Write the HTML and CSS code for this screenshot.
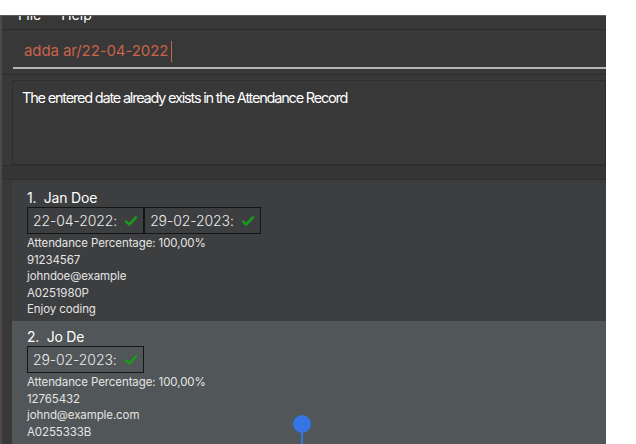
FILE: index.html
```html
<!DOCTYPE html>
<html>
<head>
<meta charset="utf-8">
<link rel="stylesheet" href="styles.css">
</head>
<body>
<div class="window">
  <div class="menubar"><span class="menu">File</span><span class="menu">Help</span></div>
  <div class="command">
    <div class="cmd-text">adda ar/22-04-2022<span class="caret"></span></div>
    <div class="cmd-line"></div>
  </div>
  <div class="sep"></div>
  <div class="result-wrap">
    <div class="result">The entered date already exists in the Attendance Record</div>
  </div>
  <div class="sep2"></div>
  <div class="list">
    <div class="card">
      <div class="name">1.&nbsp; Jan Doe</div>
      <div class="tags">
        <div class="tag">22-04-2022: <svg class="check" viewBox="0 0 16 12"><path d="M1.5 6.5 L6 10.5 L14.5 1.5" fill="none" stroke="#1a9a1a" stroke-width="3"/></svg></div>
        <div class="tag">29-02-2023: <svg class="check" viewBox="0 0 16 12"><path d="M1.5 6.5 L6 10.5 L14.5 1.5" fill="none" stroke="#1a9a1a" stroke-width="3"/></svg></div>
      </div>
      <div class="info">Attendance Percentage: 100,00%</div>
      <div class="info">91234567</div>
      <div class="info">johndoe@example</div>
      <div class="info">A0251980P</div>
      <div class="info">Enjoy coding</div>
    </div>
    <div class="card alt">
      <div class="name">2.&nbsp; Jo De</div>
      <div class="tags">
        <div class="tag">29-02-2023: <svg class="check" viewBox="0 0 16 12"><path d="M1.5 6.5 L6 10.5 L14.5 1.5" fill="none" stroke="#1a9a1a" stroke-width="3"/></svg></div>
      </div>
      <div class="info">Attendance Percentage: 100,00%</div>
      <div class="info">12765432</div>
      <div class="info">johnd@example.com</div>
      <div class="info">A0255333B</div>
      <div class="pin"><div class="pin-dot"></div><div class="pin-stem"></div></div>
    </div>
  </div>
</div>
</body>
</html>
```
FILE: styles.css
```css
html, body {
  margin: 0;
  padding: 0;
  background: #ffffff;
  overflow: hidden;
}
body {
  width: 636px;
  height: 444px;
  font-family: Inter, "Liberation Sans", sans-serif;
}
.window {
  margin-top: 15px;
  width: 606px;
  height: 429px;
  background: #383838;
  border-left: 2px solid #4b4b4b;
  border-top: 1px solid #5a5a5a;
  box-sizing: border-box;
  overflow: hidden;
  display: flex;
  flex-direction: column;
}
.window > * {
  flex-shrink: 0;
}
.menubar {
  height: 13px;
  border-bottom: 1px solid #2a2a2a;
  overflow: hidden;
  padding-left: 16px;
  display: flex;
  gap: 20px;
}
.menu {
  color: #ffffff;
  font-size: 14px;
  line-height: 14px;
  margin-top: -8px;
}
.command {
  height: 39px;
  padding-left: 11px;
  display: flex;
  flex-direction: column;
}
.cmd-text {
  color: #c9634c;
  font-size: 15px;
  line-height: 22px;
  margin-top: 10px;
  padding-left: 11px;
  height: 22px;
  display: flex;
  align-items: center;
  letter-spacing: -0.1px;
}
.caret {
  display: inline-block;
  width: 1px;
  height: 21px;
  background: #c9634c;
  margin-left: 3px;
}
.cmd-line {
  margin-top: 5px;
  height: 2px;
  background: #b5b5b5;
}
.sep {
  height: 5px;
  border-bottom: 1px solid #2c2c2c;
}
.result-wrap {
  padding: 5px 0 0 10px;
  height: 91px;
  box-sizing: border-box;
  border-bottom: 1px solid #2c2c2c;
}
.result {
  height: 85px;
  box-sizing: border-box;
  border: 1px solid #2e2e2e;
  color: #ffffff;
  font-size: 14.5px;
  padding: 7px 0 0 9px;
  line-height: 20px;
  letter-spacing: -1.2px;
}
.sep2 {
  height: 14px;
  background: #353535;
  box-sizing: border-box;
  border-bottom: 1px solid #2f2f2f;
}
.list {
  flex: 1;
  margin-left: 10px;
  background: #3c3d3f;
  padding-top: 3px;
}
.card {
  background: #3d3e40;
  padding: 6px 0 0 15px;
  height: 138px;
  box-sizing: border-box;
  position: relative;
}
.card.alt {
  background: #515658;
  height: 130px;
  padding-top: 7px;
}
.name {
  color: #ffffff;
  font-size: 14px;
  line-height: 18px;
  letter-spacing: -0.2px;
}
.tags {
  display: flex;
  gap: 0;
  margin-bottom: 1px;
}
.tag {
  border: 1px solid #151515;
  color: #ececec;
  font-size: 14px;
  font-weight: 300;
  height: 27px;
  box-sizing: border-box;
  padding: 0 5px 0 5px;
  display: flex;
  align-items: center;
  gap: 7px;
  white-space: nowrap;
  letter-spacing: -0.1px;
}
.check {
  width: 14px;
  height: 11px;
}
.info {
  color: #e4e4e4;
  font-size: 11.5px;
  line-height: 16.6px;
  letter-spacing: -0.1px;
}
.pin {
  position: absolute;
  left: 281px;
  top: 94px;
  display: flex;
  flex-direction: column;
  align-items: center;
}
.pin-dot {
  width: 18px;
  height: 18px;
  border-radius: 50%;
  background: #3574e3;
}
.pin-stem {
  width: 2px;
  height: 20px;
  background: #3574e3;
}
```
